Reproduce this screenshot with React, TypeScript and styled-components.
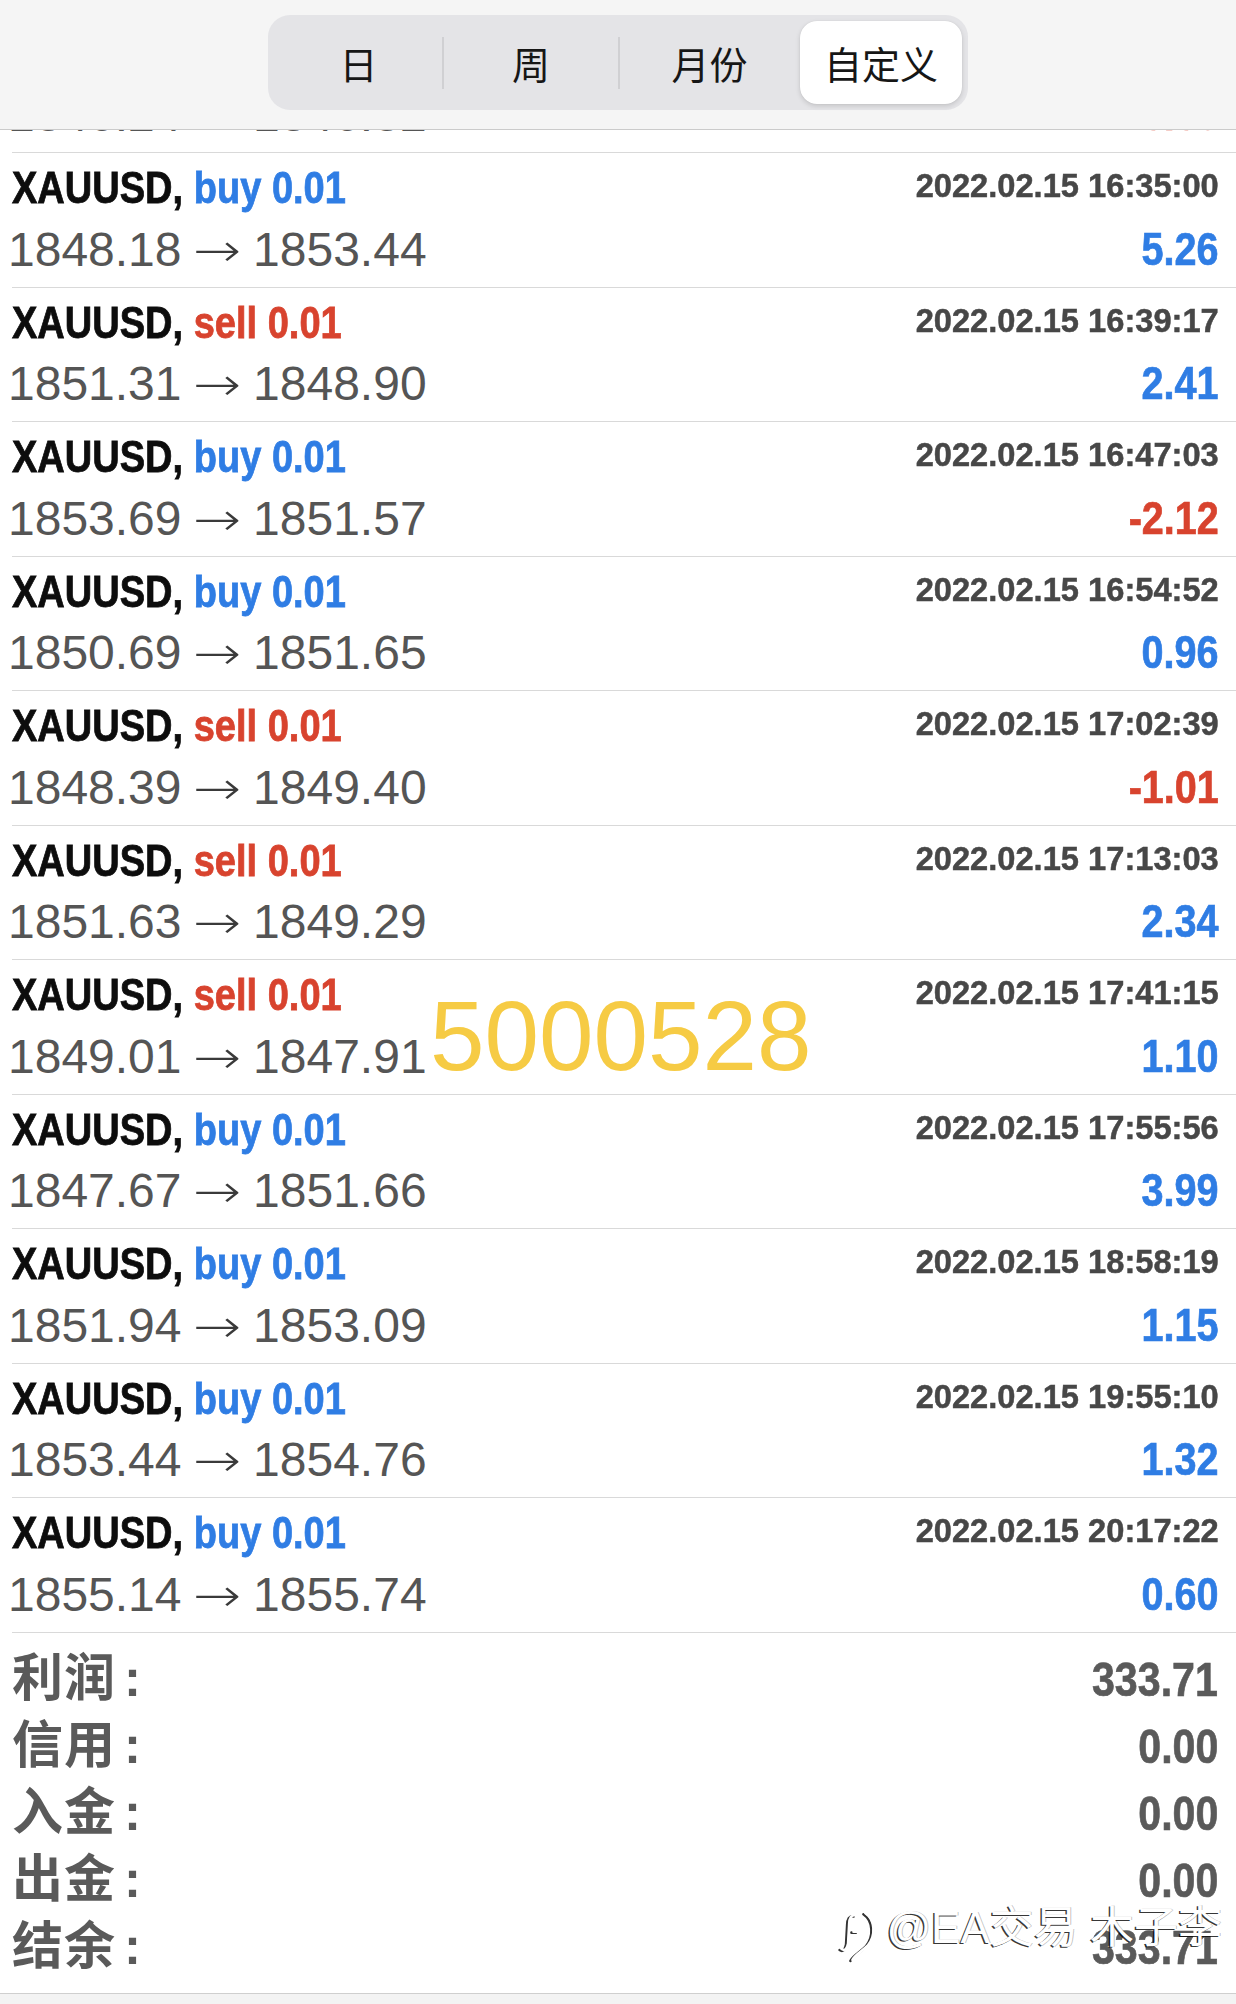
import React from 'react';
import styled, { createGlobalStyle } from 'styled-components';

type Trade = {
    side: 'buy' | 'sell'
    time: string
    open: string
    close: string
    profit: string
    stamp?: string
}

const trades: Trade[] = [
    {side: 'sell', time: '16:30:51', open: '1846.24', close: '1846.82', profit: '-0.58'},
    {side: 'buy', time: '16:35:00', open: '1848.18', close: '1853.44', profit: '5.26'},
    {side: 'sell', time: '16:39:17', open: '1851.31', close: '1848.90', profit: '2.41'},
    {side: 'buy', time: '16:47:03', open: '1853.69', close: '1851.57', profit: '-2.12'},
    {side: 'buy', time: '16:54:52', open: '1850.69', close: '1851.65', profit: '0.96'},
    {side: 'sell', time: '17:02:39', open: '1848.39', close: '1849.40', profit: '-1.01'},
    {side: 'sell', time: '17:13:03', open: '1851.63', close: '1849.29', profit: '2.34'},
    {side: 'sell', time: '17:41:15', open: '1849.01', close: '1847.91', profit: '1.10', stamp: '5000528'},
    {side: 'buy', time: '17:55:56', open: '1847.67', close: '1851.66', profit: '3.99'},
    {side: 'buy', time: '18:58:19', open: '1851.94', close: '1853.09', profit: '1.15'},
    {side: 'buy', time: '19:55:10', open: '1853.44', close: '1854.76', profit: '1.32'},
    {side: 'buy', time: '20:17:22', open: '1855.14', close: '1855.74', profit: '0.60'},
]

const totals = [
    {label: '利润', value: '333.71'},
    {label: '信用', value: '0.00'},
    {label: '入金', value: '0.00'},
    {label: '出金', value: '0.00'},
    {label: '结余', value: '333.71'},
]

const tabs = ['日', '周', '月份', '自定义']

const BLUE = '#2f7de4'
const RED = '#d8432e'

export default function App() {
    return (
        <Page>
            <GlobalStyle/>
            <Header>
                <Segmented>
                    {tabs.map((t, i) => (
                        <Segment key={t} $active={i === 3} $divider={i === 1 || i === 2}>{t}</Segment>
                    ))}
                </Segmented>
            </Header>

            <Viewport>
                <TradeList>
                    {trades.map((t, i) => (
                        <Row key={i}>
                            <Title>
                                <Squeeze $scale={0.845} $origin="left">
                                    XAUUSD, <Side $side={t.side}>{t.side} 0.01</Side>
                                </Squeeze>
                            </Title>
                            <Time>
                                <Squeeze $scale={0.96} $origin="right">2022.02.15 {t.time}</Squeeze>
                            </Time>
                            <Prices>{t.open}<Arrow>→</Arrow>{t.close}</Prices>
                            <Profit $negative={t.profit.startsWith('-')}>
                                <Squeeze $scale={0.86} $origin="right">{t.profit}</Squeeze>
                            </Profit>
                            {t.stamp && <Stamp>{t.stamp}</Stamp>}
                        </Row>
                    ))}
                </TradeList>

                <Summary>
                    {totals.map(r => (
                        <SummaryRow key={r.label}>
                            <SummaryLabel>{r.label}<Colon>:</Colon></SummaryLabel>
                            <SummaryValue>
                                <Squeeze $scale={0.84} $origin="right">{r.value}</Squeeze>
                            </SummaryValue>
                        </SummaryRow>
                    ))}
                    <Watermark>
                        <svg width="42" height="52" viewBox="0 0 38 48" fill="none" stroke="#fff"
                             strokeWidth="2.4" strokeLinecap="round">
                            <path d="M15 5 C 11 4, 9 8, 9 13 L 8 31 C 7 36, 5 38, 2 36"/>
                            <path d="M13 20 L 17 20"/>
                            <path d="M24 3 C 33 9, 34 24, 26 33 C 21 38, 15 41, 12 46"/>
                        </svg>
                        <span>@EA交易 木子李</span>
                    </Watermark>
                </Summary>
            </Viewport>

            <BottomBar/>
        </Page>
    );
}

const GlobalStyle = createGlobalStyle`
  html, body {
    margin: 0;
    padding: 0;
    background: #ffffff;
  }
  body {
    font-family: "Liberation Sans", Arial, "Noto Sans CJK SC", sans-serif;
  }
`

const Page = styled.div`
  width: 1236px;
  height: 2004px;
  display: flex;
  flex-direction: column;
  overflow: hidden;
  background: #ffffff;
`

const Header = styled.header`
  position: relative;
  z-index: 2;
  flex: none;
  box-sizing: border-box;
  height: 130px;
  padding-top: 15px;
  display: flex;
  justify-content: center;
  align-items: flex-start;
  background: #f5f5f5;
  border-bottom: 1px solid #cbcbcb;
`

const Segmented = styled.div`
  box-sizing: border-box;
  width: 700px;
  height: 95px;
  padding: 6px;
  display: grid;
  grid-template-columns: 169px 176px 1fr 162px;
  background: #e4e4e7;
  border-radius: 22px;
`

const Segment = styled.div<{ $active?: boolean, $divider?: boolean }>`
  position: relative;
  display: flex;
  align-items: center;
  justify-content: center;
  font-family: "Noto Sans CJK SC", sans-serif;
  font-size: 38px;
  line-height: 56px;
  color: #161616;
  border-radius: 17px;
  background: ${p => p.$active ? '#ffffff' : 'transparent'};
  box-shadow: ${p => p.$active ? '0 2px 5px rgba(0,0,0,0.14), 0 0 1px rgba(0,0,0,0.12)' : 'none'};

  &::before {
    content: '';
    display: ${p => p.$divider ? 'block' : 'none'};
    position: absolute;
    left: -1px;
    top: 16px;
    bottom: 15px;
    width: 2px;
    background: #d0d0d3;
  }
`

const Viewport = styled.main`
  flex: none;
  overflow: hidden;
`

const TradeList = styled.div`
  margin-top: -111.5px;
`

const Row = styled.div`
  position: relative;
  box-sizing: border-box;
  height: 134.5px;
  margin-left: 12px;
  padding: 12px 17px 0 0;
  border-bottom: 1px solid #d9d9d9;
  display: grid;
  grid-template-columns: 1fr auto;
  grid-template-rows: 45px 47px;
  row-gap: 15.5px;
`

// the bold figures in the app are a condensed face, so they get squeezed
const Squeeze = styled.span<{ $scale: number, $origin: 'left' | 'right' }>`
  display: inline-block;
  white-space: nowrap;
  transform: scaleX(${p => p.$scale});
  transform-origin: ${p => p.$origin} center;
`

const Title = styled.div`
  font-size: 45px;
  line-height: 45px;
  font-weight: 700;
  color: #0d0d0d;
  white-space: nowrap;
  -webkit-text-stroke: 0.8px currentColor;
`

const Side = styled.span<{ $side: 'buy' | 'sell' }>`
  color: ${p => p.$side === 'buy' ? BLUE : RED};
`

const Time = styled.div`
  margin-top: 3px;
  font-size: 34px;
  line-height: 34px;
  font-weight: 700;
  color: #474747;
  text-align: right;
  -webkit-text-stroke: 0.5px currentColor;
`

const Prices = styled.div`
  margin-left: -4px;
  font-size: 48px;
  line-height: 47px;
  color: #555555;
  white-space: nowrap;
`

const Arrow = styled.span`
  display: inline-block;
  margin: 0 17px 0 16px;
  font-family: "DejaVu Sans", sans-serif;
  font-weight: 300;
  font-size: 46px;
  color: #3a3a3a;
  transform: scaleX(1.25);
  transform-origin: center;
`

const Profit = styled.div<{ $negative: boolean }>`
  font-size: 46px;
  line-height: 47px;
  font-weight: 700;
  color: ${p => p.$negative ? RED : BLUE};
  text-align: right;
  -webkit-text-stroke: 0.7px currentColor;
`

const Stamp = styled.span`
  position: absolute;
  left: 418px;
  top: 27px;
  font-size: 98px;
  line-height: 98px;
  color: #f6cb44;
  pointer-events: none;
`

const Summary = styled.section`
  position: relative;
  padding: 12.5px 18px 13px 12px;
`

const SummaryRow = styled.div`
  height: 67px;
  display: flex;
  justify-content: space-between;
  align-items: baseline;
  line-height: 67px;
`

const SummaryLabel = styled.span`
  font-size: 51px;
  font-weight: 700;
  color: #5a5a5a;
  letter-spacing: 1px;
`

const Colon = styled.span`
  margin-left: 8px;
`

const SummaryValue = styled.span`
  font-size: 49px;
  font-weight: 700;
  color: #5a5a5a;
  -webkit-text-stroke: 0.7px currentColor;
`

const Watermark = styled.div`
  position: absolute;
  right: 14px;
  top: 270px;
  display: flex;
  align-items: flex-start;
  gap: 5px;
  font-size: 44px;
  line-height: 50px;
  color: #ffffff;
  white-space: nowrap;
  text-shadow: -1.5px 1px 0 rgba(0, 0, 0, 0.8), 1px -0.5px 0 rgba(0, 0, 0, 0.25);

  svg {
    margin-top: 7px;
    filter: drop-shadow(-1.5px 1px 0 rgba(0, 0, 0, 0.8));
  }
`

const BottomBar = styled.footer`
  flex: 1;
  background: #f3f3f3;
  border-top: 1px solid #cfcfcf;
`
